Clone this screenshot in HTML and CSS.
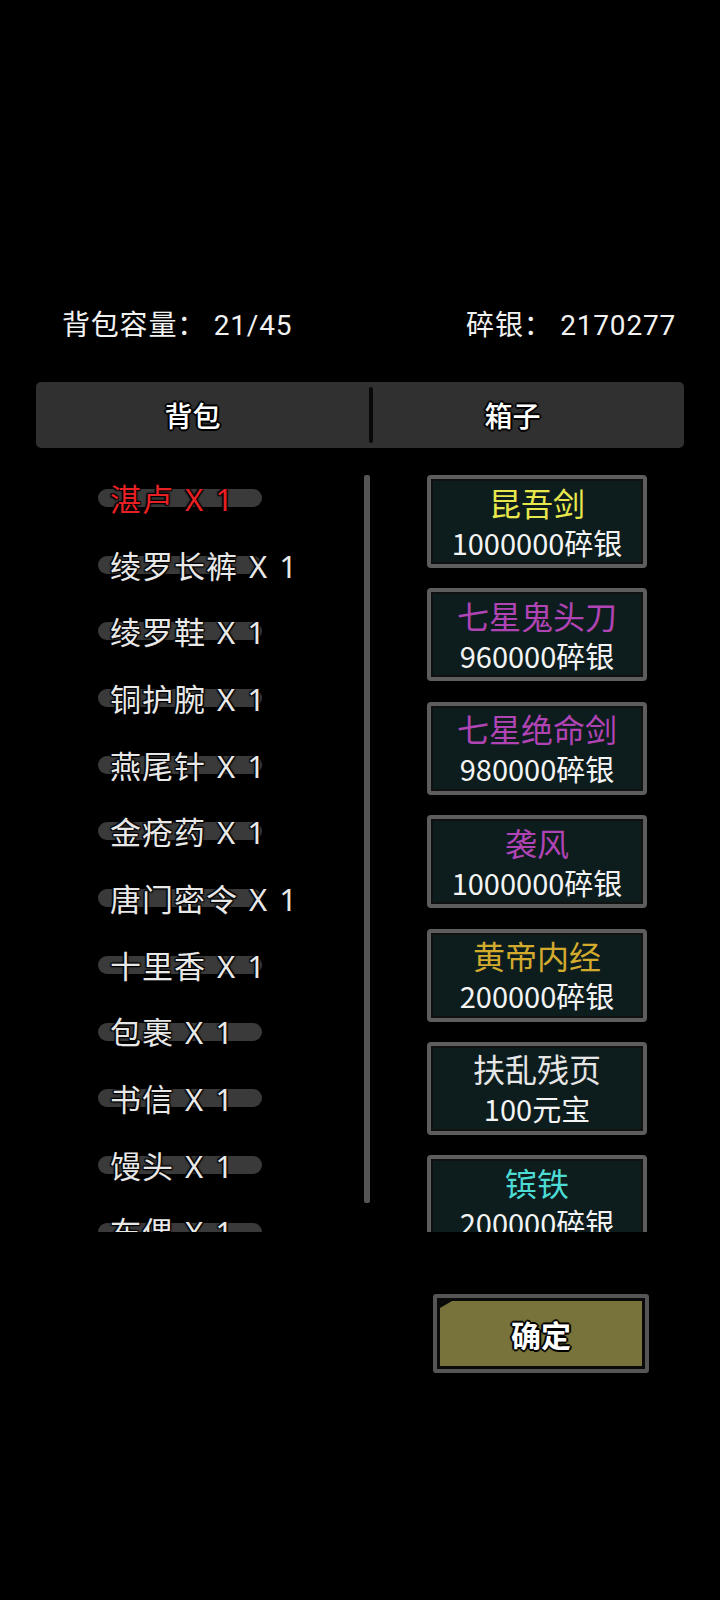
FILE: index.html
```html
<!DOCTYPE html>
<html lang="zh-CN">
<head>
    <meta charset="UTF-8">
    <meta name="viewport" content="width=device-width, initial-scale=1.0">
    <title>背包</title>
    <link rel="stylesheet" href="styles.css">
</head>
<body>
    <div class="info">
        <span>背包容量： 21/45</span>
        <span>碎银： 2170277</span>
    </div>

    <div class="tabs">
        <div class="tab tab-left outline">背包</div>
        <div class="divider"></div>
        <div class="tab tab-right outline">箱子</div>
    </div>

    <div class="main">
        <div class="bag">
            <ul class="list">
                <li class="item"><span class="name red">湛卢 X 1</span></li>
                <li class="item"><span class="name">绫罗长裤 X 1</span></li>
                <li class="item"><span class="name">绫罗鞋 X 1</span></li>
                <li class="item"><span class="name">铜护腕 X 1</span></li>
                <li class="item"><span class="name">燕尾针 X 1</span></li>
                <li class="item"><span class="name">金疮药 X 1</span></li>
                <li class="item"><span class="name">唐门密令 X 1</span></li>
                <li class="item"><span class="name">十里香 X 1</span></li>
                <li class="item"><span class="name">包裹 X 1</span></li>
                <li class="item"><span class="name">书信 X 1</span></li>
                <li class="item"><span class="name">馒头 X 1</span></li>
                <li class="item"><span class="name">布偶 X 1</span></li>
            </ul>
            <div class="scrollbar"></div>
        </div>

        <div class="box">
            <div class="card">
                <div class="title yellow">昆吾剑</div>
                <div class="price">1000000碎银</div>
            </div>
            <div class="card">
                <div class="title purple">七星鬼头刀</div>
                <div class="price">960000碎银</div>
            </div>
            <div class="card">
                <div class="title purple">七星绝命剑</div>
                <div class="price">980000碎银</div>
            </div>
            <div class="card">
                <div class="title purple">袭风</div>
                <div class="price">1000000碎银</div>
            </div>
            <div class="card">
                <div class="title gold">黄帝内经</div>
                <div class="price">200000碎银</div>
            </div>
            <div class="card">
                <div class="title">扶乱残页</div>
                <div class="price">100元宝</div>
            </div>
            <div class="card">
                <div class="title cyan">镔铁</div>
                <div class="price">200000碎银</div>
            </div>
        </div>
    </div>

    <div class="footer">
        <button class="confirm outline">确定</button>
    </div>
</body>
</html>
```

FILE: styles.css
```css
* {
    margin: 0;
    padding: 0;
    box-sizing: border-box;
}
body {
    background-color: #000;
    width: 720px;
    height: 1600px;
    overflow: hidden;
    font-family: "Noto Sans CJK SC", "Noto Sans", sans-serif;
    color: #ececec;
}
.outline {
    text-shadow: 2px 0 0 #000, -2px 0 0 #000, 0 2px 0 #000, 0 -2px 0 #000,
        1px 1px 1px #000, -1px -1px 1px #000, 1px -1px 1px #000, -1px 1px 1px #000;
}

/* cabecera */
.info {
    margin-top: 303px;
    height: 40px;
    padding: 0 44px 0 62px;
    display: flex;
    justify-content: space-between;
    align-items: center;
    font-family: Roboto, "Noto Sans CJK SC", sans-serif;
    font-size: 28px;
    letter-spacing: 0.8px;
    color: #f2f2f2;
}

/* pestañas */
.tabs {
    margin: 39px 36px 0;
    height: 66px;
    background-color: #303030;
    border-radius: 5px;
    display: flex;
    align-items: center;
}
.tab {
    font-size: 28px;
    font-weight: 500;
    color: #fff;
    text-align: center;
}
.tab-left {
    width: 333px;
    padding-right: 20px;
}
.tab-right {
    flex: 1;
    padding-right: 32px;
}
.divider {
    width: 4px;
    height: 56px;
    border-radius: 2px;
    background-color: #080808;
}

/* zona principal */
.main {
    margin-top: 16px;
    height: 768px;
    padding-left: 36px;
    display: flex;
    overflow: hidden;
}
.bag {
    width: 336px;
    display: flex;
}
.list {
    flex: 1;
    list-style: none;
}
.item {
    position: relative;
    height: 66.7px;
    display: flex;
    align-items: center;
    padding-left: 74px;
}
.item::before {
    content: "";
    position: absolute;
    left: 62px;
    top: 25px;
    width: 164px;
    height: 18px;
    border-radius: 9px;
    background-color: #3a3a3a;
}
.name {
    position: relative;
    font-family: "Noto Sans", "Noto Sans CJK SC", sans-serif;
    font-size: 31px;
    letter-spacing: 1px;
    word-spacing: 2px;
    white-space: pre;
    color: #e8e8e8;
    text-shadow: 1px 1px 1px #000, -1px -1px 1px #000, 1px -1px 1px #000, -1px 1px 1px #000, 0 0 3px #000;
}
.name.red {
    color: #e82024;
}
.scrollbar {
    width: 6px;
    height: 728px;
    margin-top: 11px;
    margin-right: 2px;
    border-radius: 2px;
    background-color: #555;
}

/* cajas */
.box {
    margin-left: 55px;
    width: 220px;
    padding-top: 11px;
}
.card {
    height: 93px;
    margin-bottom: 20.4px;
    border: 4px solid #5d5d5d;
    border-radius: 4px;
    background-color: #0d1d1d;
    box-shadow: inset 0 0 0 2px #111;
    display: flex;
    flex-direction: column;
    align-items: center;
    justify-content: center;
    line-height: 40px;
}
.title {
    font-size: 32px;
    color: #e6e6e6;
}
.price {
    font-size: 29px;
    color: #f4f4f4;
}
.yellow { color: #e8e84c; }
.purple { color: #b044b4; }
.gold { color: #d2aa2e; }
.cyan { color: #4cdcd4; }

/* botón */
.footer {
    margin-top: 62px;
    padding-left: 433px;
}
.confirm {
    position: relative;
    width: 216px;
    height: 79px;
    border: 4px solid #555;
    border-radius: 3px;
    background-color: #77733b;
    box-shadow: inset 0 0 0 3px #0a0a0a;
    font-family: "Noto Sans CJK SC", sans-serif;
    font-size: 30px;
    font-weight: 700;
    color: #fff;
}
.confirm::before {
    content: "";
    position: absolute;
    left: 3px;
    top: 3px;
    border-top: 7px solid #0a0a0a;
    border-right: 12px solid transparent;
}
```
